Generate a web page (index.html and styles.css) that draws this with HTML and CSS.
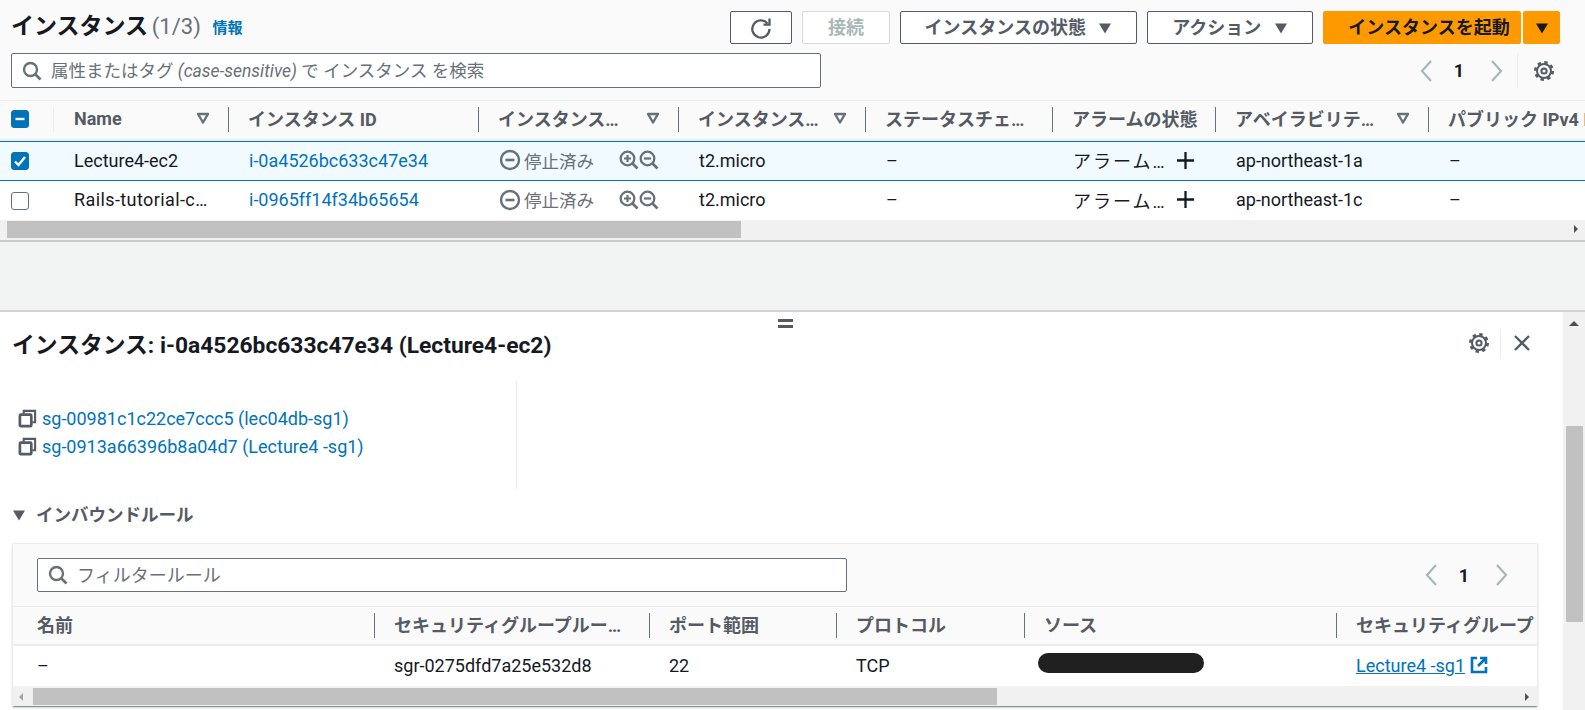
FILE: index.html
```html
<!DOCTYPE html>
<html lang="ja">
<head>
    <meta charset="UTF-8">
    <meta name="viewport" content="width=device-width, initial-scale=1.0">
    <title>インスタンス</title>
    <link rel="stylesheet" href="styles.css">
</head>
<body>
    <svg class="defs" width="0" height="0">
        <symbol id="i-search" viewBox="0 0 20 20"><circle cx="8.5" cy="8.5" r="6.5" fill="none" stroke="currentColor" stroke-width="2.4"/><path d="M13 13l5.5 5.5" stroke="currentColor" stroke-width="2.6" fill="none"/></symbol>
        <symbol id="i-filter" viewBox="0 0 14 14"><path d="M2 3h10L7 11.5z" fill="none" stroke="currentColor" stroke-width="2.4" stroke-linejoin="round"/></symbol>
        <symbol id="i-caret" viewBox="0 0 14 14"><path d="M1 2.5h12L7 12.5z" fill="currentColor"/></symbol>
        <symbol id="i-gear" viewBox="0 0 22 22"><circle cx="11" cy="11" r="8.7" fill="none" stroke="currentColor" stroke-width="2.6" stroke-dasharray="3.4 3.43"/><circle cx="11" cy="11" r="7" fill="none" stroke="currentColor" stroke-width="2"/><circle cx="11" cy="11" r="2.6" fill="none" stroke="currentColor" stroke-width="2"/></symbol>
        <symbol id="i-stop" viewBox="0 0 22 22"><circle cx="11" cy="11" r="9" fill="none" stroke="currentColor" stroke-width="2.4"/><path d="M6.5 11h9" stroke="currentColor" stroke-width="2.6"/></symbol>
        <symbol id="i-zoomin" viewBox="0 0 20 20"><circle cx="8.5" cy="8.5" r="6.8" fill="none" stroke="currentColor" stroke-width="2.3"/><path d="M13.5 13.5l5 5" stroke="currentColor" stroke-width="2.6"/><path d="M5 8.5h7M8.5 5v7" stroke="currentColor" stroke-width="2.2"/></symbol>
        <symbol id="i-zoomout" viewBox="0 0 20 20"><circle cx="8.5" cy="8.5" r="6.8" fill="none" stroke="currentColor" stroke-width="2.3"/><path d="M13.5 13.5l5 5" stroke="currentColor" stroke-width="2.6"/><path d="M5 8.5h7" stroke="currentColor" stroke-width="2.2"/></symbol>
        <symbol id="i-plus" viewBox="0 0 20 20"><path d="M1 10h18M10 1v18" stroke="currentColor" stroke-width="2.4"/></symbol>
        <symbol id="i-copy" viewBox="0 0 20 20"><path d="M6 5V2h12v12h-3" fill="none" stroke="currentColor" stroke-width="2.2"/><rect x="2" y="6" width="12" height="12" rx="1" fill="none" stroke="currentColor" stroke-width="2.8"/></symbol>
        <symbol id="i-prev" viewBox="0 0 14 24"><path d="M12 2L3 12l9 10" fill="none" stroke="currentColor" stroke-width="2.2"/></symbol>
        <symbol id="i-next" viewBox="0 0 14 24"><path d="M2 2l9 10-9 10" fill="none" stroke="currentColor" stroke-width="2.2"/></symbol>
    </svg>

    <section class="top">
        <div class="toolbar">
            <h1 class="page-title">インスタンス <span class="count">(1/3)</span> <a class="info">情報</a></h1>
            <div class="actions">
                <button class="btn btn-refresh">
                    <svg width="24" height="24" viewBox="0 0 24 24"><path d="M18.5 7.5A8.6 8.6 0 1 0 20.5 13" fill="none" stroke="currentColor" stroke-width="2.3"/><path d="M14.5 8.7h6v-6.2" fill="none" stroke="currentColor" stroke-width="2.3"/></svg>
                </button>
                <button class="btn btn-disabled">接続</button>
                <button class="btn btn-state">インスタンスの状態 <svg class="caret"><use href="#i-caret"/></svg></button>
                <button class="btn btn-action">アクション <svg class="caret"><use href="#i-caret"/></svg></button>
                <div class="launch">
                    <button class="btn btn-primary">インスタンスを起動</button>
                    <button class="btn btn-primary btn-split"><svg class="caret"><use href="#i-caret"/></svg></button>
                </div>
            </div>
        </div>
        <div class="search-row">
            <div class="search search-main">
                <svg class="search-icon"><use href="#i-search"/></svg>
                <span>属性またはタグ <i>(case-sensitive)</i> で インスタンス を検索</span>
            </div>
            <div class="pager pager-main">
                <svg class="pg-arrow"><use href="#i-prev"/></svg>
                <span class="pg-num">1</span>
                <svg class="pg-arrow"><use href="#i-next"/></svg>
            </div>
            <div class="pref">
                <svg class="gear"><use href="#i-gear"/></svg>
            </div>
        </div>
    </section>

    <div class="table">
        <div class="row head cols-main">
            <div class="cell check"><span class="box box-on"><svg width="12" height="12" viewBox="0 0 12 12"><path d="M1.5 6h9" stroke="#fff" stroke-width="2.4"/></svg></span></div>
            <div class="th th-light"><span>Name</span><svg class="filter"><use href="#i-filter"/></svg></div>
            <div class="th"><span>インスタンス ID</span></div>
            <div class="th"><span>インスタンス…</span><svg class="filter"><use href="#i-filter"/></svg></div>
            <div class="th"><span>インスタンス…</span><svg class="filter"><use href="#i-filter"/></svg></div>
            <div class="th"><span>ステータスチェ…</span></div>
            <div class="th"><span>アラームの状態</span></div>
            <div class="th"><span>アベイラビリテ…</span><svg class="filter"><use href="#i-filter"/></svg></div>
            <div class="th"><span class="nowrap">パブリック IPv4 DNS</span></div>
        </div>
        <div class="row body selected cols-main">
            <div class="cell check"><span class="box box-on"><svg width="14" height="14" viewBox="0 0 14 14"><path d="M2 7.5l3.5 3.5L12 3" fill="none" stroke="#fff" stroke-width="2.4"/></svg></span></div>
            <div class="cell">Lecture4-ec2</div>
            <div class="cell"><a>i-0a4526bc633c47e34</a></div>
            <div class="cell state">
                <svg class="stop"><use href="#i-stop"/></svg><span>停止済み</span>
                <svg class="zoom first"><use href="#i-zoomin"/></svg><svg class="zoom"><use href="#i-zoomout"/></svg>
            </div>
            <div class="cell">t2.micro</div>
            <div class="cell">–</div>
            <div class="cell alarm"><span>アラーム…</span><svg class="plus"><use href="#i-plus"/></svg></div>
            <div class="cell">ap-northeast-1a</div>
            <div class="cell">–</div>
        </div>
        <div class="row body cols-main">
            <div class="cell check"><span class="box"></span></div>
            <div class="cell long-name">Rails-tutorial-c…</div>
            <div class="cell"><a>i-0965ff14f34b65654</a></div>
            <div class="cell state">
                <svg class="stop"><use href="#i-stop"/></svg><span>停止済み</span>
                <svg class="zoom first"><use href="#i-zoomin"/></svg><svg class="zoom"><use href="#i-zoomout"/></svg>
            </div>
            <div class="cell">t2.micro</div>
            <div class="cell">–</div>
            <div class="cell alarm"><span>アラーム…</span><svg class="plus"><use href="#i-plus"/></svg></div>
            <div class="cell">ap-northeast-1c</div>
            <div class="cell">–</div>
        </div>
        <div class="hbar hbar-top">
            <div class="thumb thumb-top"></div>
            <span class="arrow-right"></span>
        </div>
    </div>

    <div class="gap"></div>

    <section class="panel">
        <div class="grip"></div>
        <div class="panel-main">
            <div class="panel-head">
                <h2>インスタンス: i-0a4526bc633c47e34 (Lecture4-ec2)</h2>
                <div class="panel-tools">
                    <svg class="gear"><use href="#i-gear"/></svg>
                    <span class="tool-sep"></span>
                    <svg class="close" viewBox="0 0 18 18"><path d="M2 2l14 14M16 2L2 16" stroke="currentColor" stroke-width="2.3"/></svg>
                </div>
            </div>
            <div class="groups">
                <div class="group-link"><svg class="copy"><use href="#i-copy"/></svg><a>sg-00981c1c22ce7ccc5 (lec04db-sg1)</a></div>
                <div class="group-link"><svg class="copy"><use href="#i-copy"/></svg><a>sg-0913a66396b8a04d7 (Lecture4 -sg1)</a></div>
            </div>
            <h3 class="inbound"><svg class="caret"><use href="#i-caret"/></svg><span>インバウンドルール</span></h3>
            <div class="card">
                <div class="card-top">
                    <div class="search search-rule">
                        <svg class="search-icon"><use href="#i-search"/></svg>
                        <span>フィルタールール</span>
                    </div>
                    <div class="pager pager-rule">
                        <svg class="pg-arrow"><use href="#i-prev"/></svg>
                        <span class="pg-num">1</span>
                        <svg class="pg-arrow"><use href="#i-next"/></svg>
                    </div>
                </div>
                <div class="row head head-rule cols-rule">
                    <div class="th-first">名前</div>
                    <div class="th"><span>セキュリティグループルー…</span></div>
                    <div class="th"><span>ポート範囲</span></div>
                    <div class="th"><span>プロトコル</span></div>
                    <div class="th"><span>ソース</span></div>
                    <div class="th"><span class="nowrap">セキュリティグループ</span></div>
                </div>
                <div class="row body-rule cols-rule">
                    <div class="cell cell-first">–</div>
                    <div class="cell">sgr-0275dfd7a25e532d8</div>
                    <div class="cell">22</div>
                    <div class="cell">TCP</div>
                    <div class="cell"><span class="redact"></span></div>
                    <div class="cell"><a class="ext">Lecture4 -sg1</a>
                        <svg class="ext-icon" viewBox="0 0 18 18"><path d="M7 2H2v14h14v-5" fill="none" stroke="currentColor" stroke-width="2.6"/><path d="M10 2h6v6M16 2L8 10" fill="none" stroke="currentColor" stroke-width="2.6"/></svg>
                    </div>
                </div>
                <div class="hbar hbar-rule">
                    <span class="arrow-left"></span>
                    <div class="thumb thumb-rule"></div>
                    <span class="arrow-right"></span>
                </div>
            </div>
        </div>
        <div class="vbar">
            <span class="arrow-up"></span>
            <div class="vthumb"></div>
        </div>
    </section>
</body>
</html>
```

FILE: styles.css
```css
* {
    box-sizing: border-box;
}
html, body {
    margin: 0;
    height: 710px;
    overflow: hidden;
}
body {
    font-family: Roboto, "Noto Sans CJK JP", sans-serif;
    font-size: 18px;
    color: #16191f;
    background: #f2f3f3;
}
a {
    color: #0073bb;
}
.defs {
    position: absolute;
}
.nowrap {
    white-space: nowrap;
}

/* top toolbar */
.top {
    height: 100px;
    padding-top: 11px;
    background: #fafafa;
}
.toolbar {
    display: flex;
    justify-content: space-between;
    height: 33px;
    padding: 0 25px 0 11px;
}
.page-title {
    margin: 0;
    font-size: 23px;
    font-weight: 700;
    line-height: 31px;
    white-space: nowrap;
}
.count {
    margin-left: -2px;
    font-size: 22px;
    font-weight: 400;
    color: #687078;
}
.info {
    margin-left: 6px;
    font-size: 15px;
    font-weight: 700;
    vertical-align: 1px;
}
.actions {
    display: flex;
    gap: 10px;
}
.btn {
    height: 33px;
    padding: 0 0 3px;
    border: 1px solid #545b64;
    border-radius: 2px;
    background: #fff;
    color: #545b64;
    font: 700 18px Roboto, "Noto Sans CJK JP", sans-serif;
    white-space: nowrap;
}
.btn-refresh {
    display: flex;
    align-items: center;
    justify-content: center;
    width: 62px;
    padding: 0;
}
.btn-disabled {
    width: 88px;
    border-color: #d5dbdb;
    color: #aab7b8;
}
.btn-state {
    width: 237px;
}
.btn-action {
    width: 166px;
}
.caret {
    width: 14px;
    height: 14px;
    margin-left: 8px;
    vertical-align: -1px;
}
.launch {
    display: flex;
    gap: 2px;
}
.btn-primary {
    width: 198px;
    padding-left: 14px;
    border-color: #ff9900;
    background: #ff9900;
    color: #16191f;
}
.btn-split {
    width: 37px;
    padding: 0;
}
.btn-split .caret {
    margin: 0;
}

.search-row {
    display: flex;
    align-items: center;
    height: 35px;
    margin-top: 9px;
    padding-left: 11px;
}
.search {
    display: flex;
    align-items: center;
    height: 35px;
    border: 1px solid #687078;
    border-radius: 2px;
    background: #fff;
    color: #687078;
    font-size: 17.5px;
}
.search span {
    padding-bottom: 3px;
}
.search-main {
    width: 810px;
}
.search-rule {
    width: 810px;
    height: 34px;
    font-size: 18px;
}
.search-icon {
    width: 20px;
    height: 20px;
    margin: 0 9px 0 10px;
}
.pager {
    display: flex;
    align-items: center;
    color: #aab7b8;
}
.pager-main {
    margin-left: 598px;
}
.pg-arrow {
    width: 14px;
    height: 24px;
}
.pg-num {
    width: 57px;
    padding-right: 5px;
    color: #16191f;
    font-weight: 700;
    text-align: center;
}
.pref {
    display: flex;
    align-items: center;
    height: 35px;
    margin-left: 13px;
    padding-left: 15px;
    border-left: 1px solid #eaeded;
    color: #545b64;
}
.gear {
    width: 22px;
    height: 22px;
}

/* instances table */
.table {
    overflow: hidden;
    background: #fff;
}
.row {
    display: grid;
    align-items: center;
}
.cols-main {
    grid-template-columns: 53px 175px 250px 200px 187px 187px 163px 213px 157px;
}
.cols-rule {
    grid-template-columns: 361px 275px 187px 188px 312px 199px;
}
.head {
    height: 41px;
    padding-bottom: 2px;
    border-top: 1px solid #eaeded;
    border-bottom: 2px solid #eaeded;
    background: #fafafa;
}
.th, .th-first {
    display: flex;
    align-items: center;
    justify-content: space-between;
    height: 25px;
    padding: 0 18px 2px 19px;
    border-left: 1px solid #687078;
    color: #545b64;
    font-weight: 700;
    white-space: nowrap;
    overflow: hidden;
}
.th-first {
    border-left: 0;
    padding-left: 24px;
}
.th-light {
    border-left-color: #eaeded;
    padding-left: 20px;
}
.filter {
    flex: none;
    width: 14px;
    height: 14px;
    color: #687078;
}
.cell {
    display: flex;
    align-items: center;
    padding: 0 0 2px 20px;
    white-space: nowrap;
    overflow: hidden;
}
.cols-main .cell {
    padding-left: 21px;
}
.cols-main .check {
    padding: 0 0 0 11px;
}
.long-name {
    letter-spacing: 0.4px;
}
.box {
    display: flex;
    align-items: center;
    justify-content: center;
    width: 18px;
    height: 18px;
    border: 1px solid #687078;
    border-radius: 3px;
    background: #fff;
}
.box-on {
    border-color: #0073bb;
    background: #0073bb;
}
.body {
    height: 39px;
    background: #fff;
}
.selected {
    height: 40px;
    border-top: 1px solid #0073bb;
    border-bottom: 1px solid #0073bb;
    background: #f1faff;
}
.state {
    color: #687078;
    font-size: 17.5px;
}
.stop {
    flex: none;
    width: 22px;
    height: 22px;
    margin-right: 3px;
}
.zoom {
    flex: none;
    width: 20px;
    height: 20px;
}
.zoom.first {
    margin-left: 25px;
}
.alarm span {
    width: 103px;
    letter-spacing: 2px;
}
.plus {
    flex: none;
    width: 19px;
    height: 19px;
    color: #16191f;
}

/* fake scrollbars */
.hbar {
    display: flex;
    align-items: center;
    background: #f1f1f1;
}
.hbar-top {
    height: 22px;
    padding: 1px 0 3px 7px;
    border-bottom: 2px solid #c8cccc;
}
.thumb {
    height: 17px;
    background: #c1c1c1;
}
.thumb-top {
    width: 734px;
}
.arrow-right, .arrow-left, .arrow-up {
    width: 0;
    height: 0;
    border-style: solid;
    border-color: transparent;
}
.arrow-right {
    margin-left: auto;
    margin-right: 7px;
    border-width: 4px 0 4px 4px;
    border-left-color: #505050;
}
.arrow-left {
    margin: 0 6px;
    border-width: 4px 4px 4px 0;
    border-right-color: #a3a3a3;
}
.arrow-up {
    border-width: 0 5px 5px;
    border-bottom-color: #505050;
}

.gap {
    height: 68px;
    background: #f2f3f3;
}

/* details panel */
.panel {
    position: relative;
    display: flex;
    height: 400px;
    border-top: 2px solid #d0d3d3;
    background: #fff;
}
.grip {
    position: absolute;
    left: 778px;
    top: 7px;
    width: 15px;
    height: 9px;
    border-top: 3px solid #545b64;
    border-bottom: 3px solid #545b64;
}
.panel-main {
    width: 1563px;
}
.panel-head {
    display: flex;
    align-items: center;
    justify-content: space-between;
    height: 69px;
    padding: 0 32px 7px 12px;
}
.panel-head h2 {
    margin: 0;
    font-size: 22.8px;
    font-weight: 700;
}
.panel-tools {
    display: flex;
    align-items: center;
    color: #545b64;
}
.tool-sep {
    width: 1px;
    height: 29px;
    margin: 0 12px 0 10px;
    background: #eaeded;
}
.close {
    width: 18px;
    height: 18px;
}
.groups {
    display: flex;
    flex-direction: column;
    justify-content: center;
    gap: 6px;
    width: 517px;
    height: 108px;
    padding: 0 0 5px 18px;
    border-right: 1px solid #eaeded;
}
.group-link {
    display: flex;
    align-items: center;
    gap: 5px;
    height: 22px;
}
.copy {
    flex: none;
    width: 19px;
    height: 19px;
    color: #545b64;
}
.inbound {
    display: flex;
    align-items: center;
    height: 24px;
    margin: 14px 0 0 12px;
    color: #545b64;
    font-size: 17.5px;
    font-weight: 700;
}
.inbound span {
    margin-bottom: 4px;
}
.inbound .caret {
    margin: 0 10px 0 0;
}
.card {
    height: 164px;
    margin: 16px 25px 0 12px;
    border: 1px solid #eaeded;
    border-bottom-color: #879596;
    border-radius: 2px;
    box-shadow: 0 1px 2px rgba(0, 28, 36, 0.2);
    overflow: hidden;
}
.card-top {
    display: flex;
    align-items: center;
    height: 62px;
    padding-left: 24px;
    background: #fafafa;
}
.pager-rule {
    margin-left: 577px;
}
.head-rule {
    height: 40px;
    padding-bottom: 0;
}
.head-rule .th, .head-rule .th-first {
    padding-bottom: 4px;
}
.body-rule {
    height: 40px;
}
.cell-first {
    padding-left: 24px;
}
.ext {
    text-decoration: underline;
}
.ext-icon {
    flex: none;
    width: 18px;
    height: 18px;
    margin-left: 5px;
    color: #0073bb;
}
.redact {
    display: block;
    width: 166px;
    height: 20px;
    margin: 0 0 4px -6px;
    border-radius: 10px;
    background: #202020;
}
.hbar-rule {
    height: 21px;
}
.thumb-rule {
    width: 964px;
    margin-left: 4px;
}
.hbar-rule .arrow-right {
    margin-right: 8px;
}
.vbar {
    display: flex;
    flex-direction: column;
    align-items: center;
    width: 22px;
    padding-top: 9px;
    background: #f1f1f1;
}
.vthumb {
    width: 17px;
    height: 196px;
    margin-top: 100px;
    background: #c1c1c1;
}
```
